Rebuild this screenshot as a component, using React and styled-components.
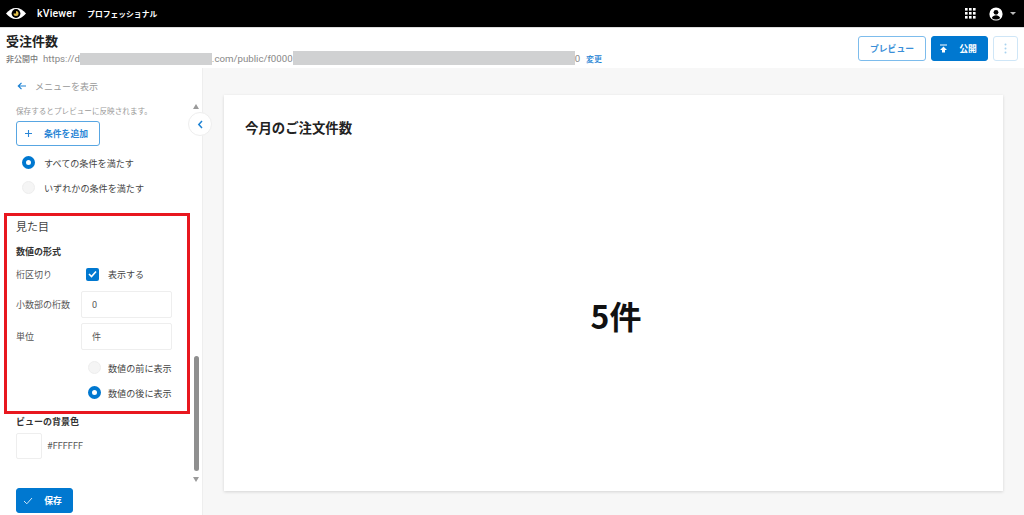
import React from 'react';
import styled, { createGlobalStyle } from 'styled-components';

const Global = createGlobalStyle`
  html, body { margin: 0; padding: 0; height: 100%; background: #fff; }
  body { font-family: "Noto Sans CJK JP", "Noto Sans", sans-serif; color: #333; overflow: hidden; }
  * { box-sizing: border-box; }
`;

const Page = styled.div`width: 1024px; height: 515px; display: flex; flex-direction: column; overflow: hidden;`;
const TopBar = styled.header`height: 27px; background: #000; color: #fff; display: flex; align-items: center; padding: 0 8px 0 6px; flex: none;`;
const Logo = styled.svg`width: 20px; height: 11px; margin-right: 11px;`;
const Brand = styled.span`font: 500 10.5px "Roboto", sans-serif; letter-spacing: .2px; margin-right: 11px;`;
const Edition = styled.span`font-size: 7.8px; font-weight: 700;`;
const TopRight = styled.div`margin-left: auto; display: flex; align-items: center; gap: 13px;`;
const Caret = styled.span`width: 0; height: 0; border: 3px solid transparent; border-top: 3.5px solid #bbb; border-bottom: 0; margin-left: -6px;`;

const Header = styled.div`height: 41px; flex: none; background: #fff; border-top: 1px solid #ddd; display: flex; justify-content: space-between; padding: 0 6px; align-items: flex-start;`;
const TitleBlock = styled.div`display: flex; flex-direction: column;`;
const Title = styled.h1`margin: 4px 0 0; font-size: 13px; line-height: 17px; font-weight: 700; color: #222;`;
const UrlRow = styled.div`display: flex; align-items: center; height: 16px; margin-top: 1px; font: 400 9.7px "Roboto", "Noto Sans CJK JP", sans-serif; color: #888; white-space: nowrap;`;
const Status = styled.span`font-size: 8px; font-weight: 500; color: #777; margin-right: 5px; font-family: "Noto Sans CJK JP", sans-serif;`;
const Redact = styled.span`display: inline-block; background: #d0d1d2; width: ${p => p.$w}px; height: ${p => p.$h}px; margin-top: ${p => p.$up}px;`;
const Change = styled.a`font: 500 8px "Noto Sans CJK JP", sans-serif; color: #1c82d4; margin-left: 6px;`;
const Actions = styled.div`display: flex; gap: 5px; margin-top: 8px;`;
const Btn = styled.button`
  height: 25px; border-radius: 3px; font: 700 8.8px "Noto Sans CJK JP", sans-serif; display: flex; align-items: center; justify-content: center;
  padding: 0 ${p => p.$pr || 0}px 0 0;
  width: ${p => p.$w}px;
  background: ${p => p.$primary ? '#0078d0' : '#fff'};
  color: ${p => p.$primary ? '#fff' : '#3a8fd8'};
  border: 1px solid ${p => p.$primary ? '#0078d0' : p.$faint ? '#cfe6f7' : '#7dbcec'};
`;

const Body = styled.div`flex: 1; display: flex; min-height: 0; position: relative;`;
const Side = styled.aside`width: 203px; flex: none; background: #fff; border-right: 1px solid #eee; position: relative; display: flex; flex-direction: column;`;
const Back = styled.div`height: 36px; flex: none; display: flex; align-items: center; padding: 0 0 0 17px; gap: 8px; font-size: 9px; color: #999;`;
const Scroller = styled.div`height: 376px; flex: none; overflow: hidden; padding: 2px 11px 0 0;`;
const Hint = styled.p`margin: 0 0 0 16px; font-size: 7.6px; line-height: 10px; color: #999; height: 15px;`;
const AddBtn = styled.button`
  margin-left: 16px; width: 84px; height: 25px; background: #fff; border: 1px solid #58a6e2; border-radius: 3px; color: #2a86d6;
  display: flex; align-items: center; padding: 0 0 0 7px; gap: 11px; font: 700 8.8px "Noto Sans CJK JP", sans-serif;
`;
const RadioRow = styled.label`display: flex; align-items: center; gap: ${p => p.$gap}px; height: 25px; font-size: 9.1px; color: #444; padding-left: ${p => p.$left}px; margin-top: ${p => p.$mt || 0}px;`;
const Radio = styled.span`
  width: 13px; height: 13px; border-radius: 50%; flex: none;
  ${p => p.$on ? 'background:#fff; border:4px solid #0078d0;' : 'background:#f5f5f5; border:1px solid #eee;'}
`;
const Marked = styled.section`margin: 13px 0 0 4px; width: 186px; height: 201px; border: 3px solid #e8171f; padding: 0 0 0 9px; display: flex; flex-direction: column;`;
const SectionTitle = styled.h3`margin: 1px 0 0; font-size: 11px; line-height: 18px; font-weight: 400; color: #444;`;
const Sub = styled.h4`margin: ${p => p.$mt || 0}px 0 0 ${p => p.$ml || 0}px; font-size: 9px; line-height: 13px; font-weight: 700; color: #333;`;
const FieldRow = styled.div`display: grid; grid-template-columns: 65px 91px; align-items: center; height: ${p => p.$h}px; font-size: 9px; color: #555; margin-top: ${p => p.$mt || 0}px;`;
const Check = styled.span`display: flex; align-items: center; gap: 9px; font-size: 9px; color: #444; margin-left: 5px;`;
const CheckBox = styled.span`width: 13px; height: 13px; background: #0078d0; border-radius: 2px; display: flex; align-items: center; justify-content: center;`;
const Field = styled.div`height: 27px; border: 1px solid #eee; border-radius: 2px; display: flex; align-items: center; padding-left: 10px; color: #555; font: 400 9px "Roboto", "Noto Sans CJK JP", sans-serif;`;
const Swatch = styled.div`width: 26px; height: 26px; border: 1px solid #eee; border-radius: 2px;`;
const ColorRow = styled.div`margin: 5px 0 0 16px; display: flex; align-items: center; gap: 5px; font: 400 9px "Roboto", sans-serif; letter-spacing: .1px; color: #555;`;
const Footer = styled.div`padding: 8px 0 0 16px;`;
const Track = styled.div`position: absolute; right: 2px; top: 36px; width: 7px; height: 378px;`;
const Arrow = styled.span`position: absolute; left: 0; width: 0; height: 0; border-left: 3.5px solid transparent; border-right: 3.5px solid transparent;
  ${p => p.$up ? 'top: 0; border-bottom: 5px solid #9a9a9a;' : 'bottom: 0; border-top: 5px solid #9a9a9a;'}`;
const Thumb = styled.div`position: absolute; left: 1px; top: 252px; width: 5px; height: 115px; background: #8f8f8f; border-radius: 3px;`;
const Collapse = styled.button`position: absolute; left: 188px; top: 44px; width: 24px; height: 24px; border-radius: 50%; background: #fff; border: 1px solid #eee; padding: 0; display: flex; align-items: center; justify-content: center; z-index: 2;`;

const Main = styled.main`flex: 1; background: #f7f7f7; padding: 27px 21px 24px 21px; display: flex;`;
const Card = styled.div`flex: 1; background: #fff; box-shadow: 0 1px 3px rgba(0,0,0,.14); padding: 23px 21px 24px; display: flex; flex-direction: column;`;
const CardTitle = styled.h2`margin: 0; font-size: 13.4px; line-height: 18px; font-weight: 700; color: #222;`;
const Value = styled.div`flex: 1; display: flex; align-items: center; justify-content: center; font-size: 32px; font-weight: 700; color: #111; padding: 25px 0 0 5px; margin-top: 2px;`;

const Apps = () => (
  <svg width="11" height="11" viewBox="0 0 11 11" fill="#fff">
    {[0, 4, 8].flatMap(y => [0, 4, 8].map(x => <rect key={`${x}-${y}`} x={x} y={y} width="2.6" height="2.6" />))}
  </svg>
);
const Account = () => (
  <svg width="14" height="14" viewBox="0 0 14 14">
    <circle cx="7" cy="7" r="6.6" fill="#fff" />
    <circle cx="7" cy="5.3" r="2.4" fill="#000" />
    <path d="M2.8 11c.8-1.9 2.4-2.7 4.2-2.7s3.4.8 4.2 2.7A5.5 5.5 0 0 1 7 12.6 5.5 5.5 0 0 1 2.8 11z" fill="#000" />
  </svg>
);

export default function App() {
  return (
    <Page>
      <Global />
      <TopBar>
        <Logo viewBox="0 0 20 11">
          <path d="M0 5.5C3 2 6 0 10 0s7 2 10 5.5C17 9 14 11 10 11S3 9 0 5.5z" fill="#fff" />
          <circle cx="10" cy="5.5" r="4.4" fill="#000" />
          <path d="M10 3a2.5 2.5 0 1 1-2.5 2.5H10z" fill="#e2c04c" />
        </Logo>
        <Brand>kViewer</Brand>
        <Edition>プロフェッショナル</Edition>
        <TopRight>
          <Apps />
          <Account />
          <Caret />
        </TopRight>
      </TopBar>
      <Header>
        <TitleBlock>
          <Title>受注件数</Title>
          <UrlRow>
            <Status>非公開中</Status>
            https://d
            <Redact $w={132} $h={12} $up={2} />
            .com/public/f0000
            <Redact $w={282} $h={14} $up={-1} />
            0
            <Change>変更</Change>
          </UrlRow>
        </TitleBlock>
        <Actions>
          <Btn $w={68}>プレビュー</Btn>
          <Btn $w={57} $pr={3} $primary>
            <svg width="9" height="9" viewBox="0 0 9 9" style={{ marginRight: 11 }}>
              <path d="M1 .5h7v1H1zM4.5 2.5L8 6H6v2.5H3V6H1z" fill="#fff" />
            </svg>
            公開
          </Btn>
          <Btn $w={25} $faint>
            <svg width="3" height="11" viewBox="0 0 3 11" fill="#a9d2ef">
              <circle cx="1.5" cy="1.5" r="1" /><circle cx="1.5" cy="5.5" r="1" /><circle cx="1.5" cy="9.5" r="1" />
            </svg>
          </Btn>
        </Actions>
      </Header>
      <Body>
        <Side>
          <Back>
            <svg width="10" height="10" viewBox="0 0 10 10" fill="none" stroke="#1c82d4" strokeWidth="1.2">
              <path d="M9 5H1.5M4.5 1.8L1.3 5l3.2 3.2" />
            </svg>
            メニューを表示
          </Back>
          <Scroller>
            <Hint>保存するとプレビューに反映されます。</Hint>
            <AddBtn>
              <svg width="9" height="9" viewBox="0 0 9 9" stroke="#2a86d6" strokeWidth="1.1"><path d="M4.5 1v7M1 4.5h7" /></svg>
              条件を追加
            </AddBtn>
            <RadioRow $left={22} $gap={9} $mt={4}><Radio $on />すべての条件を満たす</RadioRow>
            <RadioRow $left={22} $gap={9}><Radio />いずれかの条件を満たす</RadioRow>
            <Marked>
              <SectionTitle>見た目</SectionTitle>
              <Sub $mt={10}>数値の形式</Sub>
              <FieldRow $h={14} $mt={9}>
                <span>桁区切り</span>
                <Check>
                  <CheckBox>
                    <svg width="9" height="8" viewBox="0 0 9 8" fill="none" stroke="#fff" strokeWidth="1.6"><path d="M1 4l2.5 2.5L8 1.5" /></svg>
                  </CheckBox>
                  表示する
                </Check>
              </FieldRow>
              <FieldRow $h={27} $mt={10}><span>小数部の桁数</span><Field>0</Field></FieldRow>
              <FieldRow $h={27} $mt={5}><span>単位</span><Field>件</Field></FieldRow>
              <RadioRow $left={72} $gap={7} $mt={5}><Radio />数値の前に表示</RadioRow>
              <RadioRow $left={72} $gap={7}><Radio $on />数値の後に表示</RadioRow>
            </Marked>
            <Sub $mt={1} $ml={16}>ビューの背景色</Sub>
            <ColorRow><Swatch />#FFFFFF</ColorRow>
          </Scroller>
          <Footer>
            <Btn $w={57} $pr={4} $primary>
              <svg width="10" height="8" viewBox="0 0 10 8" fill="none" stroke="#cfe6f7" strokeWidth="1" style={{ marginRight: 11 }}><path d="M1 4l2.8 2.8L9 1" /></svg>
              保存
            </Btn>
          </Footer>
          <Track>
            <Arrow $up />
            <Thumb />
            <Arrow />
          </Track>
          <Collapse aria-label="閉じる">
            <svg width="7" height="9" viewBox="0 0 7 9" fill="none" stroke="#1c82d4" strokeWidth="1.5"><path d="M5 1L1.8 4.5 5 8" /></svg>
          </Collapse>
        </Side>
        <Main>
          <Card>
            <CardTitle>今月のご注文件数</CardTitle>
            <Value>5件</Value>
          </Card>
        </Main>
      </Body>
    </Page>
  );
}
